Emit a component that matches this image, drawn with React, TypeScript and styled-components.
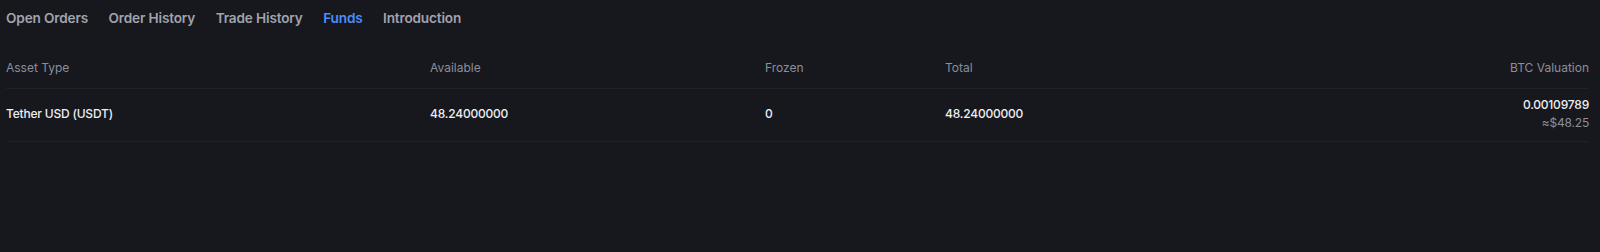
import styled, { createGlobalStyle } from 'styled-components';

const GlobalStyle = createGlobalStyle`
    html, body {
        margin: 0;
        padding: 0;
        background: #17181d;
    }
    body {
        font-family: Inter, "Noto Sans", sans-serif;
        -webkit-font-smoothing: antialiased;
    }
`;

const Page = styled.div`
    width: 1600px;
    height: 252px;
    background: #17181d;
    overflow: hidden;
`;

const Tabs = styled.nav`
    display: flex;
    height: 35px;
    align-items: center;
    gap: 20.5px;
    padding: 0 6px;
`;

const Tab = styled.span<{ $active?: boolean }>`
    color: ${(p) => (p.$active ? '#4c8dff' : '#a1a3ad')};
    font-size: 13.6px;
    font-weight: 600;
    letter-spacing: -0.15px;
    cursor: pointer;
`;

const Table = styled.div`
    margin-top: 11px;
    padding: 0 11px 0 6px;
`;

const Row = styled.div<{ $head?: boolean }>`
    display: grid;
    grid-template-columns: 424px 335px 180px 1fr auto;
    align-items: center;
    height: ${(p) => (p.$head ? '42px' : '49px')};
    padding-bottom: ${(p) => (p.$head ? '0' : '3px')};
    border-bottom: 1px solid #202127;
    font-size: 12px;
    color: ${(p) => (p.$head ? '#8b8e9a' : '#eeeff2')};
    font-weight: ${(p) => (p.$head ? 400 : 500)};
    letter-spacing: ${(p) => (p.$head ? '0' : '-0.2px')};
`;

const Cell = styled.div<{ $right?: boolean }>`
    display: flex;
    flex-direction: column;
    align-items: ${(p) => (p.$right ? 'flex-end' : 'flex-start')};
    gap: 3px;
`;

const Sub = styled.span`
    color: #8b8e9a;
    font-weight: 400;
`;

const tabs = ['Open Orders', 'Order History', 'Trade History', 'Funds', 'Introduction'];

export default function App() {
    return (
        <Page>
            <GlobalStyle />
            <Tabs>
                {tabs.map((t) => (
                    <Tab key={t} $active={t === 'Funds'}>
                        {t}
                    </Tab>
                ))}
            </Tabs>
            <Table>
                <Row $head>
                    <Cell>Asset Type</Cell>
                    <Cell>Available</Cell>
                    <Cell>Frozen</Cell>
                    <Cell>Total</Cell>
                    <Cell $right>BTC Valuation</Cell>
                </Row>
                <Row>
                    <Cell>Tether USD (USDT)</Cell>
                    <Cell>48.24000000</Cell>
                    <Cell>0</Cell>
                    <Cell>48.24000000</Cell>
                    <Cell $right>
                        <span>0.00109789</span>
                        <Sub>≈$48.25</Sub>
                    </Cell>
                </Row>
            </Table>
        </Page>
    );
}
